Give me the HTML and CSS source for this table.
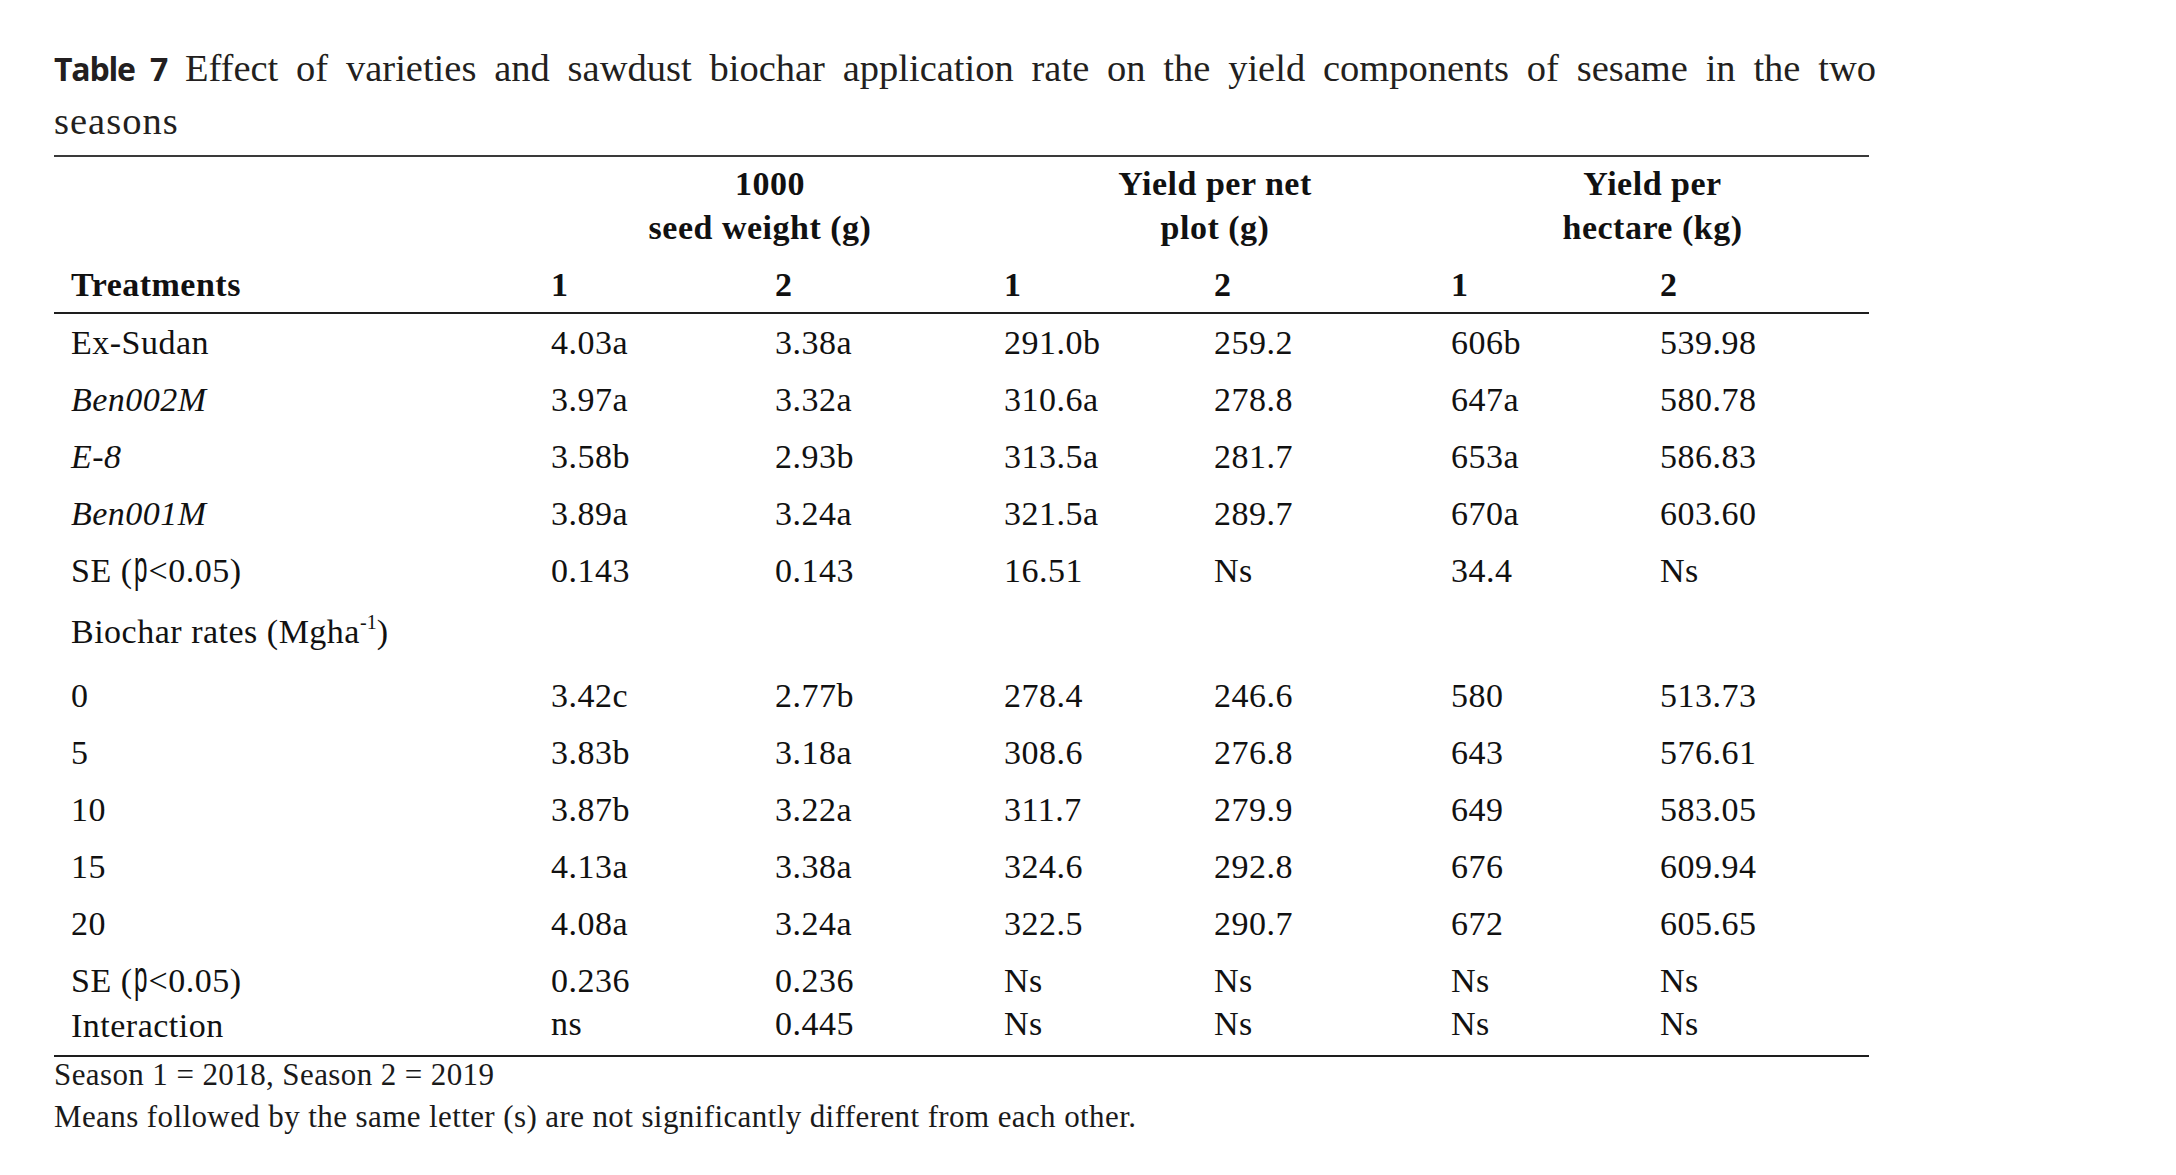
FILE: index.html
```html
<!DOCTYPE html>
<html lang="en">
<head>
<meta charset="utf-8">
<title>Table 7</title>
<link rel="stylesheet" href="styles.css">
</head>
<body>
<div class="page">
  <p class="caption">
    <span class="cap-l1"><b class="tlabel">Table 7</b> Effect of varieties and sawdust biochar application rate on the yield components of sesame in the two</span>
    <span class="cap-l2">seasons</span>
  </p>

  <div class="tbl">
    <div class="thead">
      <div class="row grp">
        <div class="c0"></div>
        <div class="g g1"><span class="gl1a">1000</span><span class="gl2a">seed weight (g)</span></div>
        <div class="g g2"><span class="gl">Yield per net</span><span class="gl">plot (g)</span></div>
        <div class="g g3"><span class="gl">Yield per</span><span class="gl">hectare (kg)</span></div>
      </div>
      <div class="row hrow">
        <div class="c0">Treatments</div>
        <div>1</div><div>2</div><div>1</div><div>2</div><div>1</div><div>2</div>
      </div>
    </div>

    <div class="tbody">
      <div class="row">
        <div class="c0">Ex-Sudan</div>
        <div>4.03a</div><div>3.38a</div><div>291.0b</div><div>259.2</div><div>606b</div><div>539.98</div>
      </div>
      <div class="row">
        <div class="c0 it">Ben002M</div>
        <div>3.97a</div><div>3.32a</div><div>310.6a</div><div>278.8</div><div>647a</div><div>580.78</div>
      </div>
      <div class="row">
        <div class="c0 it">E-8</div>
        <div>3.58b</div><div>2.93b</div><div>313.5a</div><div>281.7</div><div>653a</div><div>586.83</div>
      </div>
      <div class="row">
        <div class="c0 it">Ben001M</div>
        <div>3.89a</div><div>3.24a</div><div>321.5a</div><div>289.7</div><div>670a</div><div>603.60</div>
      </div>
      <div class="row">
        <div class="c0">SE (<span class="pp">p</span>&lt;0.05)</div>
        <div>0.143</div><div>0.143</div><div>16.51</div><div>Ns</div><div>34.4</div><div>Ns</div>
      </div>
      <div class="row sect">
        <div class="c0">Biochar rates (Mgha<sup class="sup">-1</sup>)</div>
      </div>
      <div class="row first-rate">
        <div class="c0">0</div>
        <div>3.42c</div><div>2.77b</div><div>278.4</div><div>246.6</div><div>580</div><div>513.73</div>
      </div>
      <div class="row">
        <div class="c0">5</div>
        <div>3.83b</div><div>3.18a</div><div>308.6</div><div>276.8</div><div>643</div><div>576.61</div>
      </div>
      <div class="row">
        <div class="c0">10</div>
        <div>3.87b</div><div>3.22a</div><div>311.7</div><div>279.9</div><div>649</div><div>583.05</div>
      </div>
      <div class="row">
        <div class="c0">15</div>
        <div>4.13a</div><div>3.38a</div><div>324.6</div><div>292.8</div><div>676</div><div>609.94</div>
      </div>
      <div class="row">
        <div class="c0">20</div>
        <div>4.08a</div><div>3.24a</div><div>322.5</div><div>290.7</div><div>672</div><div>605.65</div>
      </div>
      <div class="row">
        <div class="c0">SE (<span class="pp">p</span>&lt;0.05)</div>
        <div>0.236</div><div>0.236</div><div>Ns</div><div>Ns</div><div>Ns</div><div>Ns</div>
      </div>
      <div class="row last">
        <div class="c0">Interaction</div>
        <div class="up">ns</div><div class="up">0.445</div><div class="up">Ns</div><div class="up">Ns</div><div class="up">Ns</div><div class="up">Ns</div>
      </div>
    </div>
  </div>

  <div class="notes">
    <p class="n1">Season 1 = 2018, Season 2 = 2019</p>
    <p class="n2">Means followed by the same letter (s) are not significantly different from each other.</p>
  </div>
</div>
</body>
</html>
```

FILE: styles.css
```css
html, body {
  margin: 0;
  padding: 0;
  background: #ffffff;
}

.page {
  padding-left: 54px;
  padding-top: 42px;
  font-family: "Liberation Serif", "Times New Roman", serif;
  color: #111111;
}

/* caption */
.caption {
  margin: 0;
  width: 1822px;
  font-size: 38.5px;
  line-height: 53px;
  color: #231f20;
}
.cap-l1 {
  display: block;
  text-align: justify;
  text-align-last: justify;
}
.cap-l2 {
  display: block;
  letter-spacing: 1px;
}
.tlabel {
  font-family: "Open Sans", "Liberation Sans", sans-serif;
  font-weight: 700;
  font-size: 32px;
  letter-spacing: -1.2px;
  line-height: 0;
}

/* table */
.tbl {
  width: 1815px;
  margin-top: 7px;
  border-top: 2px solid #3a3a3a;
  border-bottom: 2px solid #1e1e1e;
  font-size: 34px;
  letter-spacing: 0.5px;
}

.row {
  display: grid;
  grid-template-columns: 497px 224px 229px 210px 237px 209px 209px;
  line-height: 57px;
  white-space: nowrap;
}
.row .c0 {
  padding-left: 17px;
}

.thead {
  border-bottom: 2px solid #1e1e1e;
  font-weight: 700;
}
.grp {
  line-height: 44px;
  padding-top: 5px;
}
.g {
  display: flex;
  flex-direction: column;
  align-items: center;
}
.g1 { grid-column: 2 / 4; padding-right: 25px; }
.g2 { grid-column: 4 / 6; padding-right: 25px; }
.g3 { grid-column: 6 / 8; padding-right: 15px; }
.gl1a { padding-left: 10px; }
.gl2a { padding-right: 10px; }

.hrow {
  line-height: 44px;
  padding-top: 13px;
  padding-bottom: 5px;
}

.it { font-style: italic; }

.sect { padding-top: 4px; }
.first-rate { padding-top: 7px; }
.last {
  line-height: 34px;
  padding-bottom: 12px;
}
.up {
  position: relative;
  top: -2px;
}

.pp {
  display: inline-block;
  font-family: "Liberation Sans", "Arial", sans-serif;
  font-size: 44px;
  line-height: 0;
  transform: scaleX(0.55);
  transform-origin: left center;
  margin-right: -10px;
  margin-left: 1px;
}

.sup {
  font-size: 20px;
  line-height: 0;
  vertical-align: 14px;
  letter-spacing: 0;
}

/* notes */
.notes {
  font-size: 31px;
  letter-spacing: 0.4px;
  color: #1a1a1a;
}
.notes p { margin: 0; white-space: nowrap; }
.n1 { line-height: 36px; }
.n2 { line-height: 47px; }
```
